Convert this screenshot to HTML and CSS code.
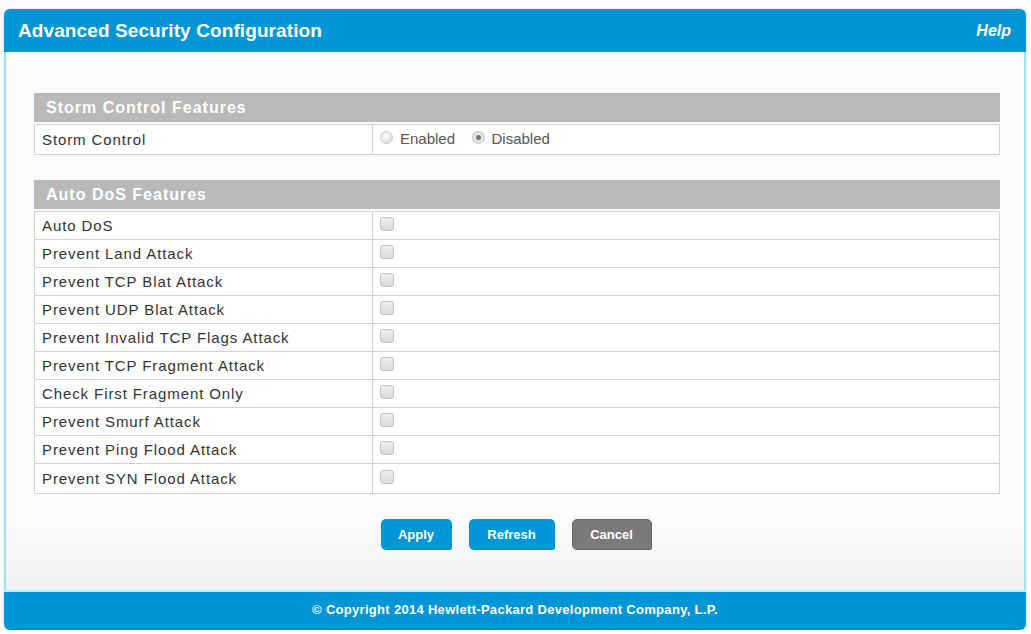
FILE: index.html
```html
<!DOCTYPE html>
<html lang="en">
<head>
    <meta charset="UTF-8">
    <title>Advanced Security Configuration</title>
    <link rel="stylesheet" href="styles.css">
</head>
<body>
    <div class="frame">
        <div class="title-bar">
            <span class="title">Advanced Security Configuration</span>
            <a class="help" href="#">Help</a>
        </div>
        <div class="content">
            <div class="section">
                <div class="section-head">Storm Control Features</div>
                <table class="grid">
                    <tr class="tall">
                        <td class="label">Storm Control</td>
                        <td>
                            <label class="choice"><input type="radio" name="storm"> Enabled</label>
                            <label class="choice"><input type="radio" name="storm" checked> Disabled</label>
                        </td>
                    </tr>
                </table>
            </div>
            <div class="section">
                <div class="section-head">Auto DoS Features</div>
                <table class="grid">
                    <tr><td class="label">Auto DoS</td><td><input type="checkbox"></td></tr>
                    <tr><td class="label">Prevent Land Attack</td><td><input type="checkbox"></td></tr>
                    <tr><td class="label">Prevent TCP Blat Attack</td><td><input type="checkbox"></td></tr>
                    <tr><td class="label">Prevent UDP Blat Attack</td><td><input type="checkbox"></td></tr>
                    <tr><td class="label">Prevent Invalid TCP Flags Attack</td><td><input type="checkbox"></td></tr>
                    <tr><td class="label">Prevent TCP Fragment Attack</td><td><input type="checkbox"></td></tr>
                    <tr><td class="label">Check First Fragment Only</td><td><input type="checkbox"></td></tr>
                    <tr><td class="label">Prevent Smurf Attack</td><td><input type="checkbox"></td></tr>
                    <tr><td class="label">Prevent Ping Flood Attack</td><td><input type="checkbox"></td></tr>
                    <tr class="last"><td class="label">Prevent SYN Flood Attack</td><td><input type="checkbox"></td></tr>
                </table>
            </div>
            <div class="actions">
                <button class="btn apply">Apply</button>
                <button class="btn refresh">Refresh</button>
                <button class="btn cancel">Cancel</button>
            </div>
        </div>
        <div class="footer">&copy; Copyright 2014 Hewlett-Packard Development Company, L.P.</div>
    </div>
</body>
</html>
```

FILE: styles.css
```css
body {
    font-family: "Liberation Sans", Arial, sans-serif;
    margin: 0;
    padding: 0;
    background: #ffffff;
}
.frame {
    margin: 9px 5px 0 4px;
    height: 621px;
    display: flex;
    flex-direction: column;
    border-radius: 6px;
    overflow: hidden;
    box-shadow: 0 0 2px rgba(0, 120, 170, 0.35);
}
.title-bar {
    height: 43px;
    background: #0096d6;
    display: flex;
    align-items: center;
    justify-content: space-between;
    padding: 0 14px 0 14px;
    flex-shrink: 0;
}
.title {
    color: #fff;
    font-weight: bold;
    font-size: 19px;
    letter-spacing: 0.1px;
}
.help {
    color: #fff;
    font-weight: bold;
    font-style: italic;
    font-size: 16px;
    text-decoration: none;
    margin-right: 1px;
}
.content {
    flex: 1;
    background: linear-gradient(#fbfbfb, #fbfbfb 88%, #f1f1f1);
    border-left: 2px solid #a9def0;
    border-right: 2px solid #a9def0;
    padding: 41px 24px 0 28px;
}
.section {
    margin-bottom: 25px;
}
.section-head {
    height: 29px;
    line-height: 29px;
    background: #b9b9b9;
    color: #fff;
    font-weight: bold;
    font-size: 16px;
    letter-spacing: 1px;
    padding-left: 12px;
    margin-bottom: 2px;
}
.grid {
    width: 100%;
    border-collapse: collapse;
    background: #fff;
}
.grid td {
    border: 1px solid #d2d2d2;
    height: 28px;
    padding: 0 7px;
    box-sizing: border-box;
}
.grid .tall td {
    height: 30px;
}
.grid .last td {
    height: 30px;
}
.grid td.label {
    width: 338px;
    color: #333;
    font-size: 15px;
    letter-spacing: 0.9px;
}
.choice {
    color: #555;
    font-size: 15px;
    margin-right: 12px;
    display: inline-flex;
    align-items: center;
    gap: 7px;
}
input[type="radio"] {
    appearance: none;
    width: 13px;
    height: 13px;
    margin: 0;
    border-radius: 50%;
    border: 1px solid #c8c8c8;
    background: radial-gradient(circle at 40% 35%, #fafafa, #d8d8d8);
    position: relative;
    top: -1px;
}
input[type="radio"]:checked {
    background: radial-gradient(circle, #666 0, #777 2px, #e6e6e6 3px, #d4d4d4);
}
input[type="checkbox"] {
    appearance: none;
    width: 14px;
    height: 14px;
    margin: 0;
    border-radius: 3px;
    border: 1px solid #c4c4c4;
    background: linear-gradient(#eeeeee, #dadada);
    vertical-align: middle;
    position: relative;
    top: -2px;
}
.actions {
    display: flex;
    justify-content: center;
    gap: 17px;
    margin-top: 0;
    padding-right: 2px;
}
.btn {
    height: 31px;
    border: none;
    border-radius: 5px 5px 2px 5px;
    color: #fff;
    font-family: "Liberation Sans", Arial, sans-serif;
    font-weight: bold;
    font-size: 13px;
    cursor: pointer;
}
.apply {
    width: 71px;
    background: #0096d6;
}
.refresh {
    width: 86px;
    background: #0096d6;
}
.cancel {
    width: 80px;
    background: #7a7a7a;
    border: 1px solid #666;
}
.footer {
    height: 40px;
    line-height: 36px;
    background: #0096d6;
    color: #fff;
    text-align: center;
    font-weight: bold;
    font-size: 13px;
    letter-spacing: 0.3px;
    flex-shrink: 0;
    border-top: 2px solid #c5eaf6;
    box-sizing: border-box;
}
```
